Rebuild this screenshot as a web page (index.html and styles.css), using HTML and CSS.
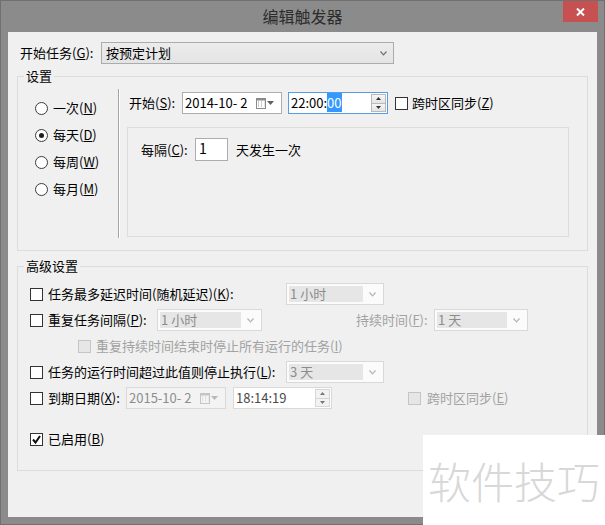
FILE: index.html
```html
<!DOCTYPE html>
<html lang="zh-CN">
<head>
<meta charset="utf-8">
<title>编辑触发器</title>
<link rel="stylesheet" href="styles.css">
</head>
<body>
<div class="window">
  <div class="titlebar">
    <span></span>
    <h1 class="title">编辑触发器</h1>
    <div class="tb-right">
      <button class="close" aria-label="关闭">
        <svg width="9" height="8" viewBox="0 0 9 8"><path d="M1 0.5 L8 7.5 M8 0.5 L1 7.5" stroke="#fff" stroke-width="2"/></svg>
      </button>
    </div>
  </div>
  <div class="client">
    <div class="row start-row">
      <span class="lbl-start">开始任务(<u>G</u>):</span>
      <div class="select">
        <span class="select-text">按预定计划</span>
        <svg class="chev" width="7" height="5" viewBox="0 0 7 5"><polyline points="0.5,0.5 3.5,3.8 6.5,0.5" fill="none" stroke="#707070" stroke-width="1.2"/></svg>
      </div>
    </div>

    <fieldset class="group group-settings">
      <legend>设置</legend>
      <div class="settings-body">
        <div class="freq">
          <div class="radio-row"><span class="radio"></span><span>一次(<u>N</u>)</span></div>
          <div class="radio-row"><span class="radio on"><span class="dot"></span></span><span>每天(<u>D</u>)</span></div>
          <div class="radio-row"><span class="radio"></span><span>每周(<u>W</u>)</span></div>
          <div class="radio-row"><span class="radio"></span><span>每月(<u>M</u>)</span></div>
        </div>
        <div class="schedule">
          <div class="row start-time">
            <span class="lbl-s">开始(<u>S</u>):</span>
            <div class="datebox">
              <span class="dt-text">2014-10-&nbsp;2</span>
              <svg class="cal" width="10" height="11" viewBox="0 0 10 11"><rect x="0.5" y="0.5" width="9" height="10" fill="#fff" stroke="#8a8a8a"/><rect x="0.5" y="0.5" width="9" height="2" fill="#8a8a8a"/><path d="M2 4h1M5 4h1M8 4h0.5M2 6h1M5 6h1M8 6h0.5M2 8h1M5 8h1M8 8h0.5" stroke="#9a9a9a" stroke-width="1"/></svg>
              <svg class="dd" width="7" height="4" viewBox="0 0 7 4"><path d="M0 0 H7 L3.5 4 Z" fill="#606060"/></svg>
            </div>
            <div class="timebox focused">
              <span class="tm-text">22:00:<span class="sel">00</span></span>
              <div class="spin">
                <span class="spin-btn"><svg width="5" height="3" viewBox="0 0 5 3"><path d="M0 3 H5 L2.5 0 Z" fill="#333"/></svg></span>
                <span class="spin-btn"><svg width="5" height="3" viewBox="0 0 5 3"><path d="M0 0 H5 L2.5 3 Z" fill="#333"/></svg></span>
              </div>
            </div>
            <span class="check"></span>
            <span class="check-lbl">跨时区同步(<u>Z</u>)</span>
          </div>
          <div class="panel">
            <div class="row every-row">
              <span class="lbl-every">每隔(<u>C</u>):</span>
              <div class="numbox">1</div>
              <span>天发生一次</span>
            </div>
          </div>
        </div>
      </div>
    </fieldset>

    <fieldset class="group group-adv">
      <legend>高级设置</legend>
      <div class="adv-body">
        <div class="row">
          <span class="check"></span>
          <span class="lbl lbl-wide">任务最多延迟时间(随机延迟)(<u>K</u>):</span>
          <div class="combo combo-98"><span class="ctext">1 小时</span><span class="carrow"><svg width="7" height="5" viewBox="0 0 7 5"><polyline points="0.5,0.5 3.5,3.8 6.5,0.5" fill="none" stroke="#b4b4b4" stroke-width="1.2"/></svg></span></div>
        </div>
        <div class="row">
          <span class="check"></span>
          <span class="lbl lbl-repeat">重复任务间隔(<u>P</u>):</span>
          <div class="combo combo-105"><span class="ctext">1 小时</span><span class="carrow"><svg width="7" height="5" viewBox="0 0 7 5"><polyline points="0.5,0.5 3.5,3.8 6.5,0.5" fill="none" stroke="#b4b4b4" stroke-width="1.2"/></svg></span></div>
          <span class="lbl lbl-dur disabled">持续时间(<u>F</u>):</span>
          <div class="combo combo-94"><span class="ctext">1 天</span><span class="carrow"><svg width="7" height="5" viewBox="0 0 7 5"><polyline points="0.5,0.5 3.5,3.8 6.5,0.5" fill="none" stroke="#b4b4b4" stroke-width="1.2"/></svg></span></div>
        </div>
        <div class="row row-indent">
          <span class="check off"></span>
          <span class="lbl disabled">重复持续时间结束时停止所有运行的任务(<u>I</u>)</span>
        </div>
        <div class="row">
          <span class="check"></span>
          <span class="lbl lbl-wide">任务的运行时间超过此值则停止执行(<u>L</u>):</span>
          <div class="combo combo-98"><span class="ctext">3 天</span><span class="carrow"><svg width="7" height="5" viewBox="0 0 7 5"><polyline points="0.5,0.5 3.5,3.8 6.5,0.5" fill="none" stroke="#b4b4b4" stroke-width="1.2"/></svg></span></div>
        </div>
        <div class="row">
          <span class="check"></span>
          <span class="lbl lbl-expire">到期日期(<u>X</u>):</span>
          <div class="datebox off">
            <span class="dt-text">2015-10-&nbsp;2</span>
            <svg class="cal" width="10" height="11" viewBox="0 0 10 11"><rect x="0.5" y="0.5" width="9" height="10" fill="#f4f4f4" stroke="#c4c4c4"/><rect x="0.5" y="0.5" width="9" height="2" fill="#c4c4c4"/><path d="M2 4h1M5 4h1M8 4h0.5M2 6h1M5 6h1M8 6h0.5M2 8h1M5 8h1M8 8h0.5" stroke="#cfcfcf" stroke-width="1"/></svg>
            <svg class="dd" width="7" height="4" viewBox="0 0 7 4"><path d="M0 0 H7 L3.5 4 Z" fill="#b8b8b8"/></svg>
          </div>
          <div class="timebox off">
            <span class="tm-text">18:14:19</span>
            <div class="spin">
              <span class="spin-btn"><svg width="5" height="3" viewBox="0 0 5 3"><path d="M0 3 H5 L2.5 0 Z" fill="#777"/></svg></span>
              <span class="spin-btn"><svg width="5" height="3" viewBox="0 0 5 3"><path d="M0 0 H5 L2.5 3 Z" fill="#777"/></svg></span>
            </div>
          </div>
          <span class="check off tz-off"></span>
          <span class="lbl disabled">跨时区同步(<u>E</u>)</span>
        </div>
        <div class="row row-enabled">
          <span class="check checked"><svg width="11" height="11" viewBox="0 0 11 11"><path d="M2 5.5 L4.5 8.5 L9 2" fill="none" stroke="#111" stroke-width="2"/></svg></span>
          <span class="lbl">已启用(<u>B</u>)</span>
        </div>
      </div>
    </fieldset>
  </div>
</div>
<div class="watermark">软件技巧</div>
</body>
</html>
```

FILE: styles.css
```css
html, body {
  margin: 0;
  padding: 0;
}
body {
  font-family: "Noto Sans CJK SC", "Noto Sans", sans-serif;
  font-size: 13px;
  color: #000;
  background: #8b8b8b;
  width: 605px;
  height: 525px;
  overflow: hidden;
}
u {
  text-decoration: underline;
  text-underline-offset: 1px;
}

.window {
  width: 605px;
  height: 525px;
  box-sizing: border-box;
  background: #8b8b8b;
  border: 1px solid #707070;
  padding: 0 7px 7px 7px;
  display: flex;
  flex-direction: column;
}

.titlebar {
  height: 31px;
  flex: none;
  display: grid;
  grid-template-columns: 1fr auto 1fr;
}
.title {
  margin: 0;
  font-size: 16px;
  font-weight: normal;
  line-height: 31px;
  color: #2c2c2c;
}
.tb-right {
  display: flex;
  justify-content: flex-end;
  align-items: flex-start;
}
.close {
  width: 35px;
  height: 21px;
  margin-right: -1px;
  padding: 0;
  border: 0;
  background: #c75050;
  display: flex;
  align-items: center;
  justify-content: center;
}

.client {
  flex: 1;
  background: #f0f0f0;
  display: flex;
  flex-direction: column;
}

.row {
  display: flex;
  align-items: center;
  height: 22px;
  white-space: nowrap;
  line-height: 18px;
}

/* start task row */
.start-row {
  margin: 10px 0 0 12px;
}
.lbl-start {
  width: 81px;
  flex: none;
}
.select {
  width: 293px;
  height: 22px;
  box-sizing: border-box;
  border: 1px solid #acacac;
  background: linear-gradient(#ececec, #e4e4e4);
  display: flex;
  align-items: center;
  padding: 0 6px 0 4px;
}
.select-text {
  flex: 1;
}

/* group boxes */
.group {
  margin: 3px 9px 0 9px;
  padding: 0;
  border: 1px solid #dcdcdc;
  min-width: 0;
}
.group legend {
  margin-left: 6px;
  padding: 0 2px;
  line-height: 18px;
  font-size: 13px;
}
.group-adv {
  margin-top: 6px;
}

.settings-body {
  display: flex;
  padding: 4px 18px 12px 0;
}
.freq {
  width: 100px;
  flex: none;
  box-sizing: border-box;
  padding: 9px 0 0 17px;
  display: flex;
  flex-direction: column;
  gap: 7px;
}
.radio-row {
  display: flex;
  align-items: center;
  height: 20px;
  gap: 5px;
  line-height: 18px;
}
.radio {
  width: 13px;
  height: 13px;
  box-sizing: border-box;
  border: 1px solid #3c3c3c;
  border-radius: 50%;
  background: #fff;
  display: flex;
  align-items: center;
  justify-content: center;
  flex: none;
}
.radio .dot {
  width: 5px;
  height: 5px;
  border-radius: 50%;
  background: #1e1e1e;
}

.schedule {
  flex: 1;
  border-left: 1px solid #a3a3a3;
  box-shadow: inset 1px 0 #ffffff;
  padding: 3px 0 1px 8px;
  display: flex;
  flex-direction: column;
}
.lbl-s {
  width: 55px;
  padding-left: 2px;
  box-sizing: border-box;
  flex: none;
}
.datebox {
  width: 100px;
  height: 22px;
  box-sizing: border-box;
  border: 1px solid #abadb3;
  background: #fff;
  display: flex;
  align-items: center;
  padding: 0 7px 0 2px;
  margin-right: 6px;
  flex: none;
}
.dt-text {
  flex: 1;
}
.datebox .cal {
  margin-right: 1px;
}
.datebox.off {
  border-color: #d9d9d9;
  background: #f3f3f3;
  color: #8d8d8d;
}
.timebox {
  width: 100px;
  height: 22px;
  box-sizing: border-box;
  border: 1px solid #abadb3;
  background: #fff;
  display: flex;
  align-items: center;
  padding: 0 1px 0 2px;
  flex: none;
}
.timebox.focused {
  border-color: #569de5;
  margin-right: 7px;
}
.timebox.off {
  width: 99px;
  border-color: #d9d9d9;
  color: #4a4a4a;
}
.tm-text {
  flex: 1;
}
.sel {
  background: #3399ff;
  color: #fff;
}
.spin {
  width: 15px;
  height: 18px;
  display: flex;
  flex-direction: column;
  gap: 0;
  flex: none;
}
.spin-btn {
  flex: 1;
  box-sizing: border-box;
  border: 1px solid #b9b9b9;
  background: linear-gradient(#f6f6f6, #e4e4e4);
  display: flex;
  align-items: center;
  justify-content: center;
}
.spin-btn + .spin-btn {
  border-top: 0;
}
.timebox.off .spin-btn {
  border-color: #d6d6d6;
  background: #f2f2f2;
}

.check {
  width: 13px;
  height: 13px;
  box-sizing: border-box;
  border: 1px solid #333;
  background: #fff;
  flex: none;
  display: flex;
  align-items: center;
  justify-content: center;
}
.check.off {
  border-color: #c5c5c5;
  background: #e6e6e6;
}
.check-lbl {
  margin-left: 4px;
}

.panel {
  margin-top: 13px;
  height: 110px;
  box-sizing: border-box;
  border: 1px solid #dcdcdc;
  padding: 10px 13px;
}
.every-row {
  height: 23px;
}
.lbl-every {
  width: 54px;
  flex: none;
}
.numbox {
  width: 33px;
  height: 23px;
  box-sizing: border-box;
  border: 1px solid #abadb3;
  background: #fff;
  padding-left: 3px;
  line-height: 19px;
  font-size: 14px;
  margin-right: 8px;
}

/* advanced */
.adv-body {
  display: flex;
  flex-direction: column;
  gap: 4px;
  padding: 8px 12px 20px 12px;
}
.adv-body .check + .lbl {
  margin-left: 5px;
}
.lbl {
  flex: none;
}
.lbl-wide {
  width: 238px;
}
.lbl-repeat {
  width: 109px;
}
.lbl-expire {
  width: 78px;
}
.lbl-dur {
  width: 78px;
  margin-left: 94px;
}
.disabled {
  color: #a2a2a2;
}
.row-indent {
  padding-left: 48px;
}
.row-enabled {
  margin-top: 15px;
}
.tz-off {
  margin-left: 76px;
}
.lbl-expire + .datebox {
  margin-right: 7px;
}
.tz-off + .lbl {
  margin-left: 6px !important;
}

.combo {
  height: 22px;
  box-sizing: border-box;
  border: 1px solid #d9d9d9;
  background: #fbfbfb;
  padding: 2px;
  display: flex;
  flex: none;
}
.combo-98 { width: 98px; }
.combo-105 { width: 105px; }
.combo-94 { width: 94px; }
.ctext {
  flex: 1;
  background: #e6e6e6;
  color: #8c8c8c;
  padding-left: 1px;
  line-height: 16px;
}
.carrow {
  width: 18px;
  display: flex;
  align-items: center;
  justify-content: center;
}

.watermark {
  position: absolute;
  left: 423px;
  top: 435px;
  width: 182px;
  height: 90px;
  box-sizing: border-box;
  background: #fff;
  color: #d8d8d8;
  font-size: 43px;
  font-weight: 300;
  line-height: 1;
  padding-left: 5px;
  display: flex;
  align-items: center;
  white-space: nowrap;
}
```
